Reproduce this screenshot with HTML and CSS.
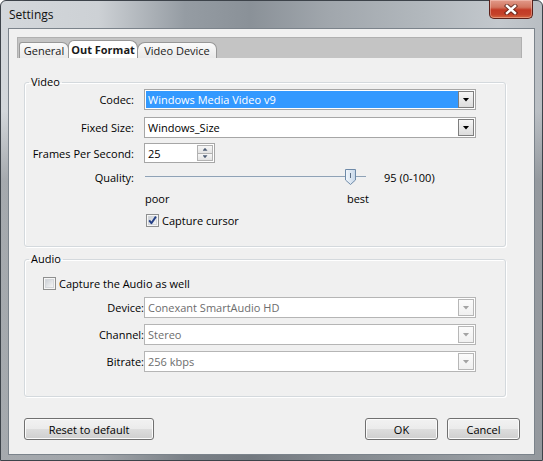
FILE: index.html
```html
<!DOCTYPE html>
<html lang="en">
<head>
<meta charset="utf-8">
<title>Settings</title>
<link rel="stylesheet" href="styles.css">
</head>
<body>
<div class="window">
  <div class="titlebar">
    <span class="title">Settings</span>
    <button class="close" type="button" aria-label="Close">
      <svg width="14" height="11" viewBox="0 0 14 11">
        <path d="M3 2 L11 9 M11 2 L3 9" stroke="#4a1c14" stroke-width="4.4" stroke-linecap="square" fill="none" opacity="0.7"/>
        <path d="M3 2 L11 9 M11 2 L3 9" stroke="#ffffff" stroke-width="2.4" stroke-linecap="square" fill="none"/>
      </svg>
    </button>
  </div>

  <div class="client">
    <div class="tabstrip">
      <span class="tab first">General</span>
      <span class="tab active">Out Format</span>
      <span class="tab last">Video Device</span>
    </div>

    <fieldset class="group video">
      <legend>Video</legend>
      <div class="row r-codec">
        <span class="lbl">Codec:</span>
        <div class="combo focused"><span class="combo-text">Windows Media Video v9</span><span class="combo-btn"></span></div>
      </div>
      <div class="row r-size">
        <span class="lbl">Fixed Size:</span>
        <div class="combo"><span class="combo-text">Windows_Size</span><span class="combo-btn"></span></div>
      </div>
      <div class="row r-fps">
        <span class="lbl">Frames Per Second:</span>
        <div class="spin">
          <span class="spin-text">25</span>
          <span class="spin-btns"><span class="spin-up"></span><span class="spin-down"></span></span>
        </div>
      </div>
      <div class="row r-quality">
        <span class="lbl">Quality:</span>
        <div class="slider" style="--value:95">
          <span class="track"></span>
          <svg class="thumb" width="11" height="16" viewBox="0 0 11 16">
            <defs>
              <linearGradient id="thumbFill" x1="0" y1="0" x2="1" y2="0">
                <stop offset="0" stop-color="#f4f8fc"/>
                <stop offset="1" stop-color="#c5d6e8"/>
              </linearGradient>
            </defs>
            <path d="M0.5 0.5 H10.5 V11 L5.5 15.5 L0.5 11 Z" fill="url(#thumbFill)" stroke="#6e8aa8"/>
            <path d="M5.5 4 V9" stroke="#5c6f86" stroke-width="1"/>
          </svg>
        </div>
        <span class="slider-value">95 (0-100)</span>
      </div>
      <div class="row r-ticks">
        <span class="lbl"></span>
        <div class="ticks"><span>poor</span><span>best</span></div>
      </div>
      <div class="row r-cursor">
        <span class="lbl"></span>
        <label class="check on">
          <svg width="13" height="13" viewBox="0 0 13 13">
            <defs>
              <linearGradient id="boxOn" x1="0" y1="0" x2="1" y2="1">
                <stop offset="0" stop-color="#cbcfd5"/>
                <stop offset="1" stop-color="#f7f7f7"/>
              </linearGradient>
            </defs>
            <rect x="0.5" y="0.5" width="12" height="12" fill="#f6f6f6" stroke="#8e8f8f"/>
            <rect x="2.5" y="2.5" width="8" height="8" fill="url(#boxOn)" stroke="#d4d7db"/>
            <path d="M3.2 6.4 L5.4 9.2 L9.9 2.6" stroke="#243f86" stroke-width="1.9" fill="none" stroke-linejoin="round"/>
          </svg>
          <span>Capture cursor</span>
        </label>
      </div>
    </fieldset>

    <fieldset class="group audio">
      <legend>Audio</legend>
      <div class="row r-audio-check">
        <label class="check">
          <svg width="13" height="13" viewBox="0 0 13 13">
            <defs>
              <linearGradient id="boxOff" x1="0" y1="0" x2="1" y2="1">
                <stop offset="0" stop-color="#cbcfd5"/>
                <stop offset="1" stop-color="#f7f7f7"/>
              </linearGradient>
            </defs>
            <rect x="0.5" y="0.5" width="12" height="12" fill="#f6f6f6" stroke="#8e8f8f"/>
            <rect x="2.5" y="2.5" width="8" height="8" fill="url(#boxOff)" stroke="#d4d7db"/>
          </svg>
          <span>Capture the Audio as well</span>
        </label>
      </div>
      <div class="row r-device">
        <span class="lbl">Device:</span>
        <div class="combo disabled"><span class="combo-text">Conexant SmartAudio HD</span><span class="combo-btn"></span></div>
      </div>
      <div class="row r-channel">
        <span class="lbl">Channel:</span>
        <div class="combo disabled"><span class="combo-text">Stereo</span><span class="combo-btn"></span></div>
      </div>
      <div class="row r-bitrate">
        <span class="lbl">Bitrate:</span>
        <div class="combo disabled"><span class="combo-text">256 kbps</span><span class="combo-btn"></span></div>
      </div>
    </fieldset>

    <div class="buttons">
      <button class="btn reset" type="button">Reset to default</button>
      <span class="spacer"></span>
      <button class="btn ok" type="button">OK</button>
      <button class="btn cancel" type="button">Cancel</button>
    </div>
  </div>
</div>
</body>
</html>
```

FILE: styles.css
```css
* {
  box-sizing: border-box;
}

html,
body {
  margin: 0;
  padding: 0;
  background: #ffffff;
}

body {
  font-family: "Open Sans", "Noto Sans", "DejaVu Sans", sans-serif;
  font-size: 11px;
  color: #000;
}

/* ---------- window frame ---------- */

.window {
  width: 543px;
  height: 461px;
  display: flex;
  flex-direction: column;
  border: 1px solid #3d434a;
  border-radius: 6px 6px 0 0;
  padding: 0 7px 5px 7px;
  background:
    linear-gradient(to bottom, rgba(255, 255, 255, 0) 0px, rgba(255, 255, 255, 0) 110px, rgba(60, 64, 70, 0.3) 180px, rgba(60, 64, 70, 0.3) 100%),
    linear-gradient(to right, #d3d7db 0%, #cdd1d5 18%, #959ca3 34%, #8a9198 46%, #a0a6ac 60%, #b2b8bd 78%, #c3c8cd 92%, #b9bec3 100%);
}

.titlebar {
  height: 27px;
  margin: 0 -7px;
  padding: 0 9px 0 8px;
  display: flex;
  align-items: flex-start;
}

.title {
  font-size: 12px;
  line-height: 14px;
  margin-top: 7px;
  color: #111;
}

.close {
  margin-left: auto;
  width: 44px;
  height: 19px;
  margin-top: -1px;
  padding: 0;
  border: 1px solid #5b2019;
  border-top: none;
  border-radius: 0 0 5px 5px;
  display: flex;
  align-items: center;
  justify-content: center;
  background: linear-gradient(to bottom, #e29a8a 0%, #d27660 40%, #c23a25 55%, #c4412a 80%, #d4683f 100%);
  box-shadow: inset 0 0 0 1px rgba(255, 220, 210, 0.4);
}

.close svg {
  display: block;
}

/* ---------- client area ---------- */

.client {
  flex: 1;
  background: #f0f0f0;
  border: 1px solid #7b838b;
  padding-top: 8px;
  display: flex;
  flex-direction: column;
}

/* ---------- tab strip ---------- */

.tabstrip {
  height: 21px;
  margin: 0 12px 0 8px;
  background: #c4c4c4;
  border: 1px solid #b0b0b0;
  border-bottom: none;
  display: flex;
  align-items: flex-end;
  padding-left: 1px;
}

.tab {
  height: 16px;
  display: flex;
  align-items: center;
  justify-content: center;
  white-space: nowrap;
  border: 1px solid #989898;
  border-bottom: none;
  border-radius: 3px 7px 0 0;
  background: linear-gradient(to bottom, #fbfbfb, #e9e9e9);
  color: #1a1a1a;
  font-size: 11px;
  position: relative;
}

.tab.first {
  width: 50px;
}

.tab.active {
  height: 18px;
  width: 70px;
  margin-left: -1px;
  font-weight: bold;
  background: #ffffff;
  border-radius: 6px 8px 0 0;
  z-index: 2;
}

.tab.last {
  width: 80px;
  margin-left: -1px;
  border-radius: 8px 7px 0 0;
}

/* ---------- group boxes ---------- */

.group {
  margin: 17px 28px 0 15px;
  padding: 0 0 18px 0;
  border: 1px solid #d4d9dd;
  border-radius: 3px;
  box-shadow: inset 1px 1px 0 #ffffff, 1px 1px 0 #ffffff;
  min-width: 0;
}

.group legend {
  margin-left: 4px;
  padding: 0 2px;
  line-height: 14px;
  font-size: 11px;
}

.group.audio {
  margin-top: 5px;
  padding-bottom: 24px;
}

.row {
  display: flex;
  align-items: center;
}

.lbl {
  flex: none;
  width: 109px;
  margin-right: 10px;
  text-align: right;
  white-space: nowrap;
}

.audio .lbl {
  width: 119px;
  margin-right: 0;
}

.r-codec { height: 21px; }
.r-size { height: 21px; margin-top: 7px; }
.r-fps { height: 20px; margin-top: 5px; }
.r-quality { height: 16px; margin-top: 6px; }
.r-ticks { height: 16px; margin-top: 5px; }
.r-cursor { height: 16px; margin-top: 6px; }

.r-audio-check { height: 16px; margin-top: 9px; padding-left: 17px; }
.r-device { height: 21px; margin-top: 6px; }
.r-channel { height: 21px; margin-top: 6px; }
.r-bitrate { height: 21px; margin-top: 6px; }

/* ---------- combo boxes ---------- */

.combo {
  width: 332px;
  height: 21px;
  border: 1px solid #a6a6a6;
  padding: 1px;
  background: #ffffff;
  display: flex;
}

.combo-text {
  flex: 1;
  display: flex;
  align-items: center;
  padding-left: 2px;
  white-space: nowrap;
  overflow: hidden;
}

.combo.focused .combo-text {
  background: #3399ff;
  color: #ffffff;
}

.combo-btn {
  flex: none;
  width: 16px;
  border: 1px solid #7e7e7e;
  background: linear-gradient(to bottom, #f7f7f7, #dcdcdc);
  display: flex;
  align-items: center;
  justify-content: center;
}

.combo-btn::before {
  content: "";
  width: 7px;
  height: 4px;
  background: #000000;
  clip-path: polygon(0 0, 100% 0, 50% 100%);
}

.combo.disabled {
  border-color: #b5b5b5;
}

.combo.disabled .combo-text {
  color: #6d6d6d;
}

.combo.disabled .combo-btn {
  border-color: #b7b7b7;
  background: linear-gradient(to bottom, #fbfbfb, #f0f0f0);
}

.combo.disabled .combo-btn::before {
  background: #a3a3a3;
}

/* ---------- spin box ---------- */

.spin {
  width: 71px;
  height: 20px;
  border: 1px solid #a6a6a6;
  background: #ffffff;
  display: flex;
  padding: 1px;
}

.spin-text {
  flex: 1;
  display: flex;
  align-items: center;
  padding-left: 2px;
}

.spin-btns {
  flex: none;
  width: 16px;
  display: flex;
  flex-direction: column;
}

.spin-up,
.spin-down {
  flex: 1;
  border: 1px solid #b2b2b2;
  background: linear-gradient(to bottom, #f7f7f7, #e3e3e3);
  display: flex;
  align-items: center;
  justify-content: center;
}

.spin-down {
  border-top: none;
}

.spin-up::before,
.spin-down::before {
  content: "";
  width: 5px;
  height: 3px;
  background: #4e5d74;
}

.spin-up::before {
  clip-path: polygon(50% 0, 100% 100%, 0 100%);
}

.spin-down::before {
  clip-path: polygon(0 0, 100% 0, 50% 100%);
}

/* ---------- slider ---------- */

.slider {
  position: relative;
  width: 221px;
  height: 16px;
  margin-left: 1px;
  display: flex;
  align-items: center;
}

.track {
  width: 100%;
  height: 2px;
  border-top: 1px solid #8fa2b6;
  border-bottom: 1px solid #eef1f4;
}

.thumb {
  position: absolute;
  top: 0;
  left: calc((100% - 11px) * var(--value) / 100);
}

.slider-value {
  margin-left: 18px;
}

.ticks {
  width: 224px;
  margin-left: 1px;
  display: flex;
  justify-content: space-between;
}

/* ---------- check boxes ---------- */

.check {
  display: flex;
  align-items: center;
  gap: 3px;
  margin-left: 2px;
}

.check svg {
  display: block;
  flex: none;
}

.r-audio-check .check {
  margin-left: 1px;
}

/* ---------- dialog buttons ---------- */

.buttons {
  margin: 21px 14px 0 15px;
  display: flex;
  gap: 9px;
}

.spacer {
  flex: 1;
}

.btn {
  height: 22px;
  padding: 0;
  font-family: inherit;
  font-size: 11px;
  color: #000;
  border: 1px solid #707070;
  border-radius: 3px;
  background: linear-gradient(to bottom, #f2f2f2 0%, #ebebeb 50%, #dddddd 51%, #cfcfcf 100%);
  box-shadow: inset 0 0 0 1px #fbfbfb;
}

.btn.reset {
  width: 130px;
}

.btn.ok,
.btn.cancel {
  width: 73px;
}
```
